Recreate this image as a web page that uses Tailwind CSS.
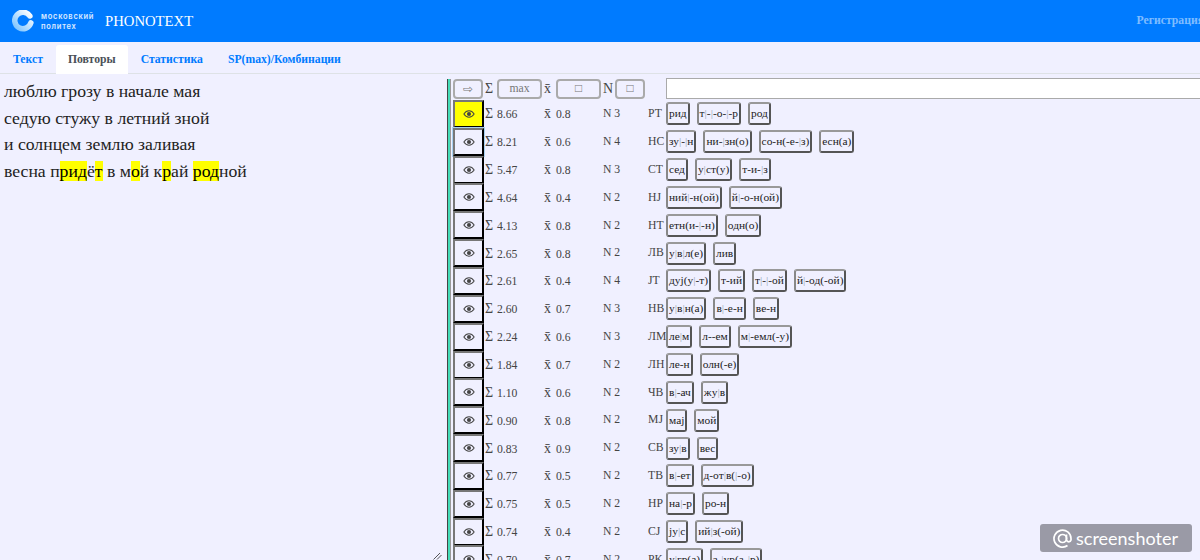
<!DOCTYPE html>
<html lang="ru">
<head>
    <meta charset="UTF-8">
    <title>PHONOTEXT</title>
    <script src="https://cdn.jsdelivr.net/npm/@tailwindcss/browser@4"></script>
</head>
<body class="h-[560px] overflow-hidden bg-[#f0f0ff] font-['Liberation_Serif',serif] text-[#444]">

    <!-- Header -->
    <header class="h-[42px] bg-[#007bff] flex items-center pl-[12px] overflow-hidden">
        <svg width="22" height="22" viewBox="0 0 24 24" class="shrink-0">
            <defs>
                <linearGradient id="ring" x1="0" y1="1" x2="1" y2="0">
                    <stop offset="0" stop-color="#7cc4ff"/>
                    <stop offset="1" stop-color="#ffffff"/>
                </linearGradient>
            </defs>
            <path d="M20.6 14A9 9 0 1 1 19.5 6.5" fill="none" stroke="url(#ring)" stroke-width="6" stroke-linecap="round"/>
        </svg>
        <div class="ml-[7px] mt-[1px] w-[64px] shrink-0 font-['Inter',sans-serif] text-[7.5px] leading-[10px] font-semibold tracking-[0.75px] text-white/85">
            <div>московский</div>
            <div>политех</div>
        </div>
        <div class="text-[14.7px] text-white shrink-0">PHONOTEXT</div>
        <div class="ml-auto mr-[-4px] text-[11.7px] font-bold text-white/50 shrink-0">Регистрация</div>
    </header>

    <!-- Tabs -->
    <nav class="h-[32px] pt-[3px] flex border-b border-[#dee2e6] text-[11.7px] font-bold text-[#007bff]">
        <a class="px-[13px] leading-[29px]">Текст</a>
        <a class="px-[12px] leading-[29px] bg-white text-[#495057] rounded-t-[3px] h-[29px]">Повторы</a>
        <a class="px-[13px] leading-[29px]">Статистика</a>
        <a class="px-[12px] leading-[29px]">SP(max)/Комбинации</a>
    </nav>

    <main class="flex h-[486px] relative">
        <!-- Text panel -->
        <div class="w-[447px] shrink-0 pl-[4px] pt-[4px] text-[17.7px] leading-[26.7px] text-[#222] relative">
            <div>люблю грозу в начале мая</div>
            <div>седую стужу в летний зной</div>
            <div>и солнцем землю заливая</div>
            <div>весна п<mark class="bg-[#ffff00]">рид</mark>ё<mark class="bg-[#ffff00]">т</mark> в м<mark class="bg-[#ffff00]">о</mark>й к<mark class="bg-[#ffff00]">р</mark>ай <mark class="bg-[#ffff00]">род</mark>ной</div>
            <svg width="9" height="8" viewBox="0 0 9 8" class="absolute left-[433px] top-[478px]">
                <path d="M0.5 7.5L7 1M4 7.5L8.5 3" stroke="#555" stroke-width="1" fill="none"/>
            </svg>
        </div>

        <!-- Divider -->
        <div class="w-[4px] mt-[5px] shrink-0 bg-[#45dcb8] border-l border-l-[#444] border-r border-r-[#999]"></div>

        <!-- Repeats list -->
        <div class="ml-[2px] flex-1 min-w-0 text-[11.7px]">
            <div class="h-[26px] flex items-center pt-[3px]">
                <button class="w-[30px] h-[20px] shrink-0 border-2 border-[#aaa] rounded-[4px] text-[12px] text-[#777] leading-none font-['DejaVu_Sans',sans-serif]">⇨</button>
                <span class="ml-[2px] w-[12px] shrink-0 text-[14px]">Σ</span>
                <input class="w-[45px] h-[20px] shrink-0 border-2 border-[#aaa] rounded-[4px] text-center text-[#777] bg-transparent placeholder:text-[#777]" placeholder="max">
                <span class="ml-[2px] w-[12px] shrink-0 text-[14px]">x̄</span>
                <input class="w-[45px] h-[20px] shrink-0 border-2 border-[#aaa] rounded-[4px] text-center bg-transparent placeholder:text-[#777]" placeholder="□">
                <span class="ml-[2px] w-[12px] shrink-0 text-[14px]">N</span>
                <input class="w-[30px] h-[20px] shrink-0 border-2 border-[#aaa] rounded-[4px] text-center bg-transparent placeholder:text-[#777]" placeholder="□">
                <input class="ml-[21px] w-[560px] h-[21px] shrink-0 bg-white border-y border-y-[#aaa] border-l border-l-[#aaa]">
            </div>
            <div id="rows"></div>
        </div>

        <!-- Watermark -->
        <div class="absolute left-[1040px] top-[450px] w-[152px] h-[28px] rounded-[3px] bg-[#9a9aa6] flex items-center pl-[13px] text-white font-['Lato',sans-serif] text-[18px]">
            <svg width="19" height="19" viewBox="0 0 19 19" class="mr-[4px]" fill="none" stroke="#fff" stroke-width="1.7">
                <circle cx="9.5" cy="9.5" r="4"/>
                <path d="M13.5 5.5v5.5a2.3 2.3 0 0 0 4.5 0V9.5a8.5 8.5 0 1 0-3.5 7"/>
            </svg>
            <span>screenshoter</span>
        </div>
    </main>

    <script>
        const rows = [
            ['8.66', '0.8', 3, 'РТ', ['рид', 'т|-|-о-|-р', 'род']],
            ['8.21', '0.6', 4, 'НС', ['зу|-|н', 'ни-|зн(о)', 'со-н(-е-|з)', 'есн(а)']],
            ['5.47', '0.8', 3, 'СТ', ['сед', 'у|ст(у)', 'т-и-|з']],
            ['4.64', '0.4', 2, 'НJ', ['ний|-н(ой)', 'й|-о-н(ой)']],
            ['4.13', '0.8', 2, 'НТ', ['етн(и-|-н)', 'одн(о)']],
            ['2.65', '0.8', 2, 'ЛВ', ['у|в|л(е)', 'лив']],
            ['2.61', '0.4', 4, 'JТ', ['дуj(у|-т)', 'т-ий', 'т|-|-ой', 'й|-од(-ой)']],
            ['2.60', '0.7', 3, 'НВ', ['у|в|н(а)', 'в|-е-н', 'ве-н']],
            ['2.24', '0.6', 3, 'ЛМ', ['ле|м', 'л--ем', 'м|-емл(-у)']],
            ['1.84', '0.7', 2, 'ЛН', ['ле-н', 'олн(-е)']],
            ['1.10', '0.6', 2, 'ЧВ', ['в|-ач', 'жу|в']],
            ['0.90', '0.8', 2, 'МJ', ['маj', 'мой']],
            ['0.83', '0.9', 2, 'СВ', ['зу|в', 'вес']],
            ['0.77', '0.5', 2, 'ТВ', ['в|-ет', 'д-от|в(|-о)']],
            ['0.75', '0.5', 2, 'НР', ['на|-р', 'ро-н']],
            ['0.74', '0.4', 2, 'СJ', ['jу|с', 'ий|з(-ой)']],
            ['0.70', '0.7', 2, 'РК', ['у|гр(а)', 'з-|ур(а-|р)']],
        ];

        const eye = `<svg width="12" height="8" viewBox="0 0 14 9" class="mx-auto"><path d="M1 4.5C3 1.5 5 .8 7 .8s4 .7 6 3.7c-2 3-4 3.7-6 3.7s-4-.7-6-3.7z" fill="none" stroke="#444" stroke-width="1.2"/><circle cx="7" cy="4.5" r="2.4" fill="#444"/></svg>`;

        document.getElementById('rows').innerHTML = rows.map((r, i) => {
            const tokens = r[4].map(t =>
                `<span class="h-[23px] leading-[19px] text-[11.4px] px-[1px] mr-[7px] border-2 border-t-[#999] border-l-[#888] border-r-[#555] border-b-[#555] rounded-[3px] whitespace-nowrap shrink-0 text-[#222]">${t.replace(/\|/g, '<span class="text-[#9ab]">|</span>')}</span>`
            ).join('');
            const btnColor = i === 0 ? 'bg-[#ffff00]' : '';
            const focus = i === 1 ? 'outline outline-1 outline-[#a8d0f0]' : '';
            return `<div class="h-[27.85px] flex items-center">
                <button class="w-[31px] h-[28px] shrink-0 border-2 border-t-[#777] border-l-[#777] border-r-black border-b-black ${btnColor} ${focus}">${eye}</button>
                <span class="ml-[1px] w-[59px] shrink-0 flex items-baseline"><span class="w-[12px] text-[14px]">Σ</span>${r[0]}</span>
                <span class="w-[59px] shrink-0 flex items-baseline"><span class="w-[12px] text-[14px]">x̄</span>${r[1]}</span>
                <span class="w-[45px] shrink-0">N ${r[2]}</span>
                <span class="w-[18px] shrink-0 whitespace-nowrap">${r[3]}</span>
                <div class="flex items-center">${tokens}</div>
            </div>`;
        }).join('');
    </script>
</body>
</html>
